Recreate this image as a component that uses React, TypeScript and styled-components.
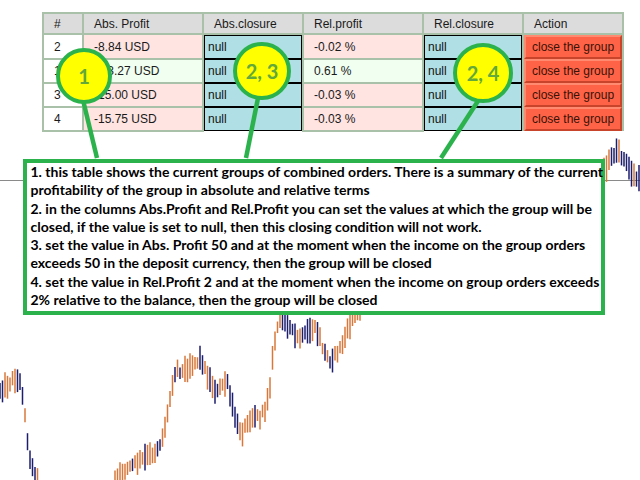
import React from "react";
import styled, { createGlobalStyle } from "styled-components";

const GlobalStyle = createGlobalStyle`
  html, body { margin: 0; padding: 0; background: #ffffff; }
  body { font-family: "Liberation Sans", Arial, sans-serif; }
`;

const Page = styled.div`
  position: relative;
  width: 640px;
  height: 480px;
  overflow: hidden;
  background: #ffffff;
`;

const ChartLayer = styled.svg`
  position: absolute;
  left: 0;
  top: 0;
  z-index: 0;
`;

const Content = styled.div`
  position: relative;
  z-index: 1;
  display: flex;
  flex-direction: column;
  align-items: flex-start;
  padding-top: 12px;
`;

const Table = styled.table`
  margin-left: 42px;
  border-collapse: collapse;
  table-layout: fixed;
  width: 580px;
  font-size: 12px;
  color: #1a1a1a;
`;

const HeadCell = styled.th<{ $w: number }>`
  width: ${(p) => p.$w}px;
  height: 21px;
  padding: 0 0 0 10px;
  text-align: left;
  font-weight: normal;
  background: #dcdcdc;
  border: 2px solid #a9c1a9;
  box-sizing: border-box;
`;

const Cell = styled.td<{ $bg?: string }>`
  height: 22px;
  padding: 0 0 0 10px;
  background: ${(p) => p.$bg || "#ffffff"};
  border: 2px solid #a9c1a9;
  white-space: nowrap;
  overflow: hidden;
`;

const InputCell = styled.td`
  height: 22px;
  padding: 0;
  border: 2px solid #a9c1a9;
  border-top: 0;
  border-bottom: 0;
`;

const NullInput = styled.div`
  box-sizing: border-box;
  height: 24px;
  line-height: 22px;
  padding-left: 3px;
  background: #b0dfe6;
  border: 1px solid #000000;
  font-size: 12px;
  color: #111;
`;

const ActionCell = styled.td`
  height: 22px;
  padding: 0;
  border: 2px solid #a9c1a9;
  border-top: 0;
  border-bottom: 0;
  background: #ffffff;
`;

const CloseButton = styled.div`
  box-sizing: border-box;
  height: 24px;
  line-height: 20px;
  padding-left: 6px;
  background: #ff6347;
  border: 2px solid;
  border-color: #ff8a70 #c8452c #c8452c #ff8a70;
  color: #3a1208;
  font-size: 12px;
  white-space: nowrap;
`;

const NoteBox = styled.div`
  margin: 27px 0 0 23px;
  width: 582px;
  height: 156px;
  box-sizing: border-box;
  border: 4.5px solid #2bb24c;
  background: #ffffff;
  padding: 0 0 0 3.5px;
  font-family: Lato, "Liberation Sans", sans-serif;
  font-weight: bold;
  font-size: 14px;
  line-height: 18.3px;
  color: #000000;
`;

const NoteLine = styled.div`
  white-space: nowrap;
`;

const Overlay = styled.svg`
  position: absolute;
  left: 0;
  top: 0;
  z-index: 2;
  pointer-events: none;
`;

const Bubble = styled.div<{ $x: number; $y: number; $d: number }>`
  position: absolute;
  z-index: 3;
  left: ${(p) => p.$x - p.$d / 2}px;
  top: ${(p) => p.$y - p.$d / 2}px;
  width: ${(p) => p.$d}px;
  height: ${(p) => p.$d}px;
  box-sizing: border-box;
  border-radius: 50%;
  border: 4.5px solid #2bb24c;
  background: #ffff00;
  display: flex;
  align-items: center;
  justify-content: center;
  font-family: Lato, "Liberation Sans", sans-serif;
  font-weight: bold;
  font-size: 20px;
  color: #62a83a;
`;

type Row = {
  id: string;
  abs: string;
  rel: string;
  positive: boolean;
};

const rows: Row[] = [
  { id: "2", abs: "-8.84 USD", rel: "-0.02 %", positive: false },
  { id: "1", abs: "273.27 USD", rel: "0.61 %", positive: true },
  { id: "3", abs: "-15.00 USD", rel: "-0.03 %", positive: false },
  { id: "4", abs: "-15.75 USD", rel: "-0.03 %", positive: false },
];

const pink = "#ffe4e1";
const green = "#f0fff0";

const leftPts: [number, number][] = [
  [0, 390], [8, 385], [14, 378], [20, 383], [24, 400], [27, 440], [32, 468], [38, 478],
  [44, 505], [110, 505], [116, 478], [125, 470], [135, 464], [145, 458], [155, 452],
  [162, 440], [168, 412], [172, 385], [176, 368], [183, 372], [190, 365], [197, 362],
  [201, 358], [206, 372], [212, 385], [217, 393], [222, 385], [227, 382], [232, 405],
  [238, 428], [243, 432], [248, 420], [255, 415], [260, 418], [265, 410], [270, 385],
  [274, 345], [278, 325], [285, 320], [290, 328], [296, 338], [302, 338], [308, 332],
  [314, 328], [319, 335], [324, 352], [330, 360], [336, 355], [342, 345], [348, 330],
  [354, 316], [362, 306],
];

const rightPts: [number, number][] = [
  [603, 172], [609, 162], [615, 152], [621, 155], [627, 165], [633, 175], [640, 182],
];

function interp(pts: [number, number][], x: number): number {
  for (let i = 0; i < pts.length - 1; i++) {
    const [x0, y0] = pts[i];
    const [x1, y1] = pts[i + 1];
    if (x >= x0 && x <= x1) {
      const t = (x - x0) / (x1 - x0 || 1);
      return y0 + (y1 - y0) * t;
    }
  }
  return pts[pts.length - 1][1];
}

type Bar = { x: number; y1: number; y2: number; c: string };

function makeBars(): Bar[] {
  let seed = 12345;
  const rnd = () => {
    seed = (seed * 1103515245 + 12345) & 0x7fffffff;
    return seed / 0x7fffffff;
  };
  const bars: Bar[] = [];
  const build = (pts: [number, number][], from: number, to: number) => {
    for (let x = from; x <= to; x += 2.5) {
      const c = interp(pts, x) + (rnd() - 0.5) * 6;
      const len = 11 + rnd() * 16;
      const rising = interp(pts, x + 3) < interp(pts, x - 3);
      const flip = rnd() < 0.3;
      const up = flip ? !rising : rising;
      bars.push({
        x,
        y1: c - len / 2,
        y2: c + len / 2,
        c: up ? "#d8773a" : "#1d1d6e",
      });
    }
  };
  build(leftPts, 0, 362);
  build(rightPts, 604, 640);
  return bars;
}

const bars = makeBars();

const Chart: React.FC = () => (
  <ChartLayer width={640} height={480} viewBox="0 0 640 480">
    <line x1={0} y1={180.5} x2={640} y2={180.5} stroke="#8a8a8a" strokeWidth={1} />
    {bars.map((b, i) => (
      <line key={i} x1={b.x} x2={b.x} y1={b.y1} y2={b.y2} stroke={b.c} strokeWidth={1.5} />
    ))}
  </ChartLayer>
);

const Connectors: React.FC = () => (
  <Overlay width={640} height={480} viewBox="0 0 640 480">
    <g stroke="#2bb24c" strokeWidth={4.5} strokeLinecap="butt">
      <line x1={83} y1={100} x2={97} y2={158} />
      <line x1={258} y1={98} x2={246} y2={158} />
      <line x1={478} y1={101} x2={441} y2={158} />
    </g>
  </Overlay>
);

export default function App() {
  return (
    <>
      <GlobalStyle />
      <Page>
        <Chart />
        <Content>
          <Table>
            <thead>
              <tr>
                <HeadCell $w={40}>#</HeadCell>
                <HeadCell $w={120}>Abs. Profit</HeadCell>
                <HeadCell $w={100}>Abs.closure</HeadCell>
                <HeadCell $w={120}>Rel.profit</HeadCell>
                <HeadCell $w={100}>Rel.closure</HeadCell>
                <HeadCell $w={100}>Action</HeadCell>
              </tr>
            </thead>
            <tbody>
              {rows.map((r) => (
                <tr key={r.id}>
                  <Cell>{r.id}</Cell>
                  <Cell $bg={r.positive ? green : pink}>{r.abs}</Cell>
                  <InputCell>
                    <NullInput>null</NullInput>
                  </InputCell>
                  <Cell $bg={r.positive ? green : pink}>{r.rel}</Cell>
                  <InputCell>
                    <NullInput>null</NullInput>
                  </InputCell>
                  <ActionCell>
                    <CloseButton>close the group</CloseButton>
                  </ActionCell>
                </tr>
              ))}
            </tbody>
          </Table>
          <NoteBox>
            <NoteLine>1. this table shows the current groups of combined orders. There is a summary of the current</NoteLine>
            <NoteLine>profitability of the group in absolute and relative terms</NoteLine>
            <NoteLine>2. in the columns Abs.Profit and Rel.Profit you can set the values at which the group will be</NoteLine>
            <NoteLine>closed, if the value is set to null, then this closing condition will not work.</NoteLine>
            <NoteLine>3. set the value in Abs. Profit 50 and at the moment when the income on the group orders</NoteLine>
            <NoteLine>exceeds 50 in the deposit currency, then the group will be closed</NoteLine>
            <NoteLine>4. set the value in Rel.Profit 2 and at the moment when the income on group orders exceeds</NoteLine>
            <NoteLine>2% relative to the balance, then the group will be closed</NoteLine>
          </NoteBox>
        </Content>
        <Connectors />
        <Bubble $x={84} $y={76} $d={56}>1</Bubble>
        <Bubble $x={262} $y={71} $d={58}>2, 3</Bubble>
        <Bubble $x={483} $y={73} $d={60}>2, 4</Bubble>
      </Page>
    </>
  );
}
